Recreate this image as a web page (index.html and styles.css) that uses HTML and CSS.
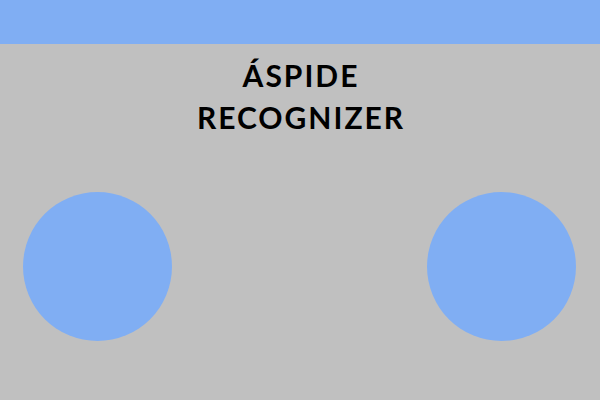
FILE: index.html
```html
<!DOCTYPE html>
<html lang="es">
<head>
<meta charset="utf-8">
<link rel="stylesheet" href="styles.css">
</head>
<body>
<div class="topbar"></div>
<h1 class="title">ÁSPIDE<br>RECOGNIZER</h1>
<div class="buttons">
  <div class="circle"></div>
  <div class="circle"></div>
</div>
</body>
</html>
```
FILE: styles.css
```css
html, body {
  margin: 0;
  padding: 0;
  width: 600px;
  height: 400px;
  background: #c0c0c0;
  overflow: hidden;
}
.topbar {
  height: 44px;
  background: #80aef3;
}
.title {
  margin: 10px 0 0 0;
  padding-left: 2px;
  text-align: center;
  font-family: "Lato", "Open Sans", sans-serif;
  font-weight: 700;
  font-size: 30px;
  line-height: 42px;
  letter-spacing: 2px;
  color: #000;
}
.buttons {
  display: flex;
  justify-content: space-between;
  padding: 0 24px 0 23px;
  margin-top: 54px;
}
.circle {
  width: 149px;
  height: 149px;
  border-radius: 50%;
  background: #80aef3;
}
```
